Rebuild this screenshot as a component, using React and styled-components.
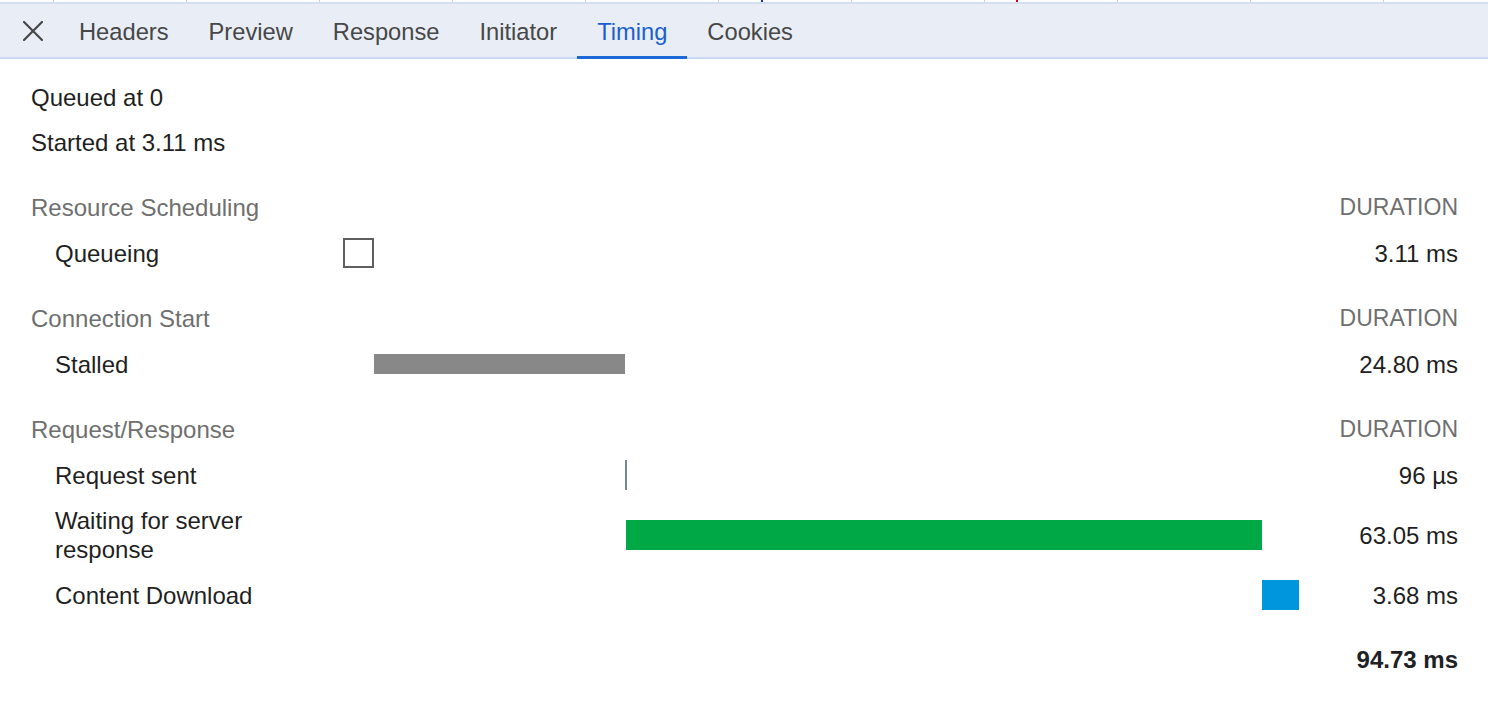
import React from 'react';
import styled, { createGlobalStyle } from 'styled-components';

const GlobalStyle = createGlobalStyle`
  html, body {
    margin: 0;
    padding: 0;
    background: #ffffff;
  }

  body {
    font-family: "Liberation Sans", Arial, Helvetica, sans-serif;
    color: #1f1f1f;
    -webkit-font-smoothing: antialiased;
  }
`;

const Page = styled.div`
  width: 1488px;
  height: 706px;
  overflow: hidden;
  background: #ffffff;
`;

const GridStrip = styled.div`
  display: flex;
  height: 2px;
  background: #ffffff;
`;

const GridCell = styled.div`
  flex: 0 0 ${(p) => p.$w}px;
  border-left: ${(p) => (p.$first ? 'none' : '1px solid #c9d4e0')};
  position: relative;
`;

const Mark = styled.span`
  position: absolute;
  top: 0;
  left: ${(p) => p.$x}px;
  width: 2px;
  height: 2px;
  background: ${(p) => p.$color};
`;

const TabBar = styled.div`
  display: flex;
  align-items: stretch;
  height: 53px;
  background: #e9eef6;
  border-top: 2px solid #d3dff1;
  border-bottom: 2px solid #c8d8ee;
`;

const CloseButton = styled.button`
  width: 59px;
  display: flex;
  align-items: center;
  justify-content: center;
  padding: 0 0 0 7px;
  border: 0;
  background: transparent;
  color: #474747;
`;

const Tab = styled.div`
  display: flex;
  align-items: center;
  padding: 2px 20px 0;
  margin-bottom: -2px;
  font-size: 23.7px;
  color: ${(p) => (p.$active ? '#1b5fcf' : '#474747')};
  box-shadow: ${(p) => (p.$active ? 'inset 0 -3px 0 #1b6ad8' : 'none')};
`;

const Content = styled.div`
  padding: 16px 30px 0 31px;
  font-size: 24px;
`;

const Summary = styled.div`
  line-height: 45px;
  margin-bottom: 19px;
`;

const Table = styled.div`
  display: grid;
  grid-template-columns: 312px 956px 1fr;
`;

const SectionHead = styled.div`
  box-sizing: border-box;
  height: 46px;
  padding-top: 1px;
  display: flex;
  align-items: center;
  color: #6f6f6f;
  margin-top: ${(p) => (p.$first ? 0 : 19)}px;
  justify-content: ${(p) => (p.$right ? 'flex-end' : 'flex-start')};
  font-size: ${(p) => (p.$right ? '23px' : '24px')};
`;

const Label = styled.div`
  min-height: 46px;
  box-sizing: border-box;
  padding: 8px 20px 8px 24px;
  line-height: 29px;
  display: flex;
  align-items: center;
`;

const Track = styled.div`
  display: flex;
  align-items: center;
`;

const Bar = styled.div`
  flex: none;
  box-sizing: border-box;
  height: ${(p) => p.$h}px;
  background: ${(p) => p.$color || 'transparent'};
  border: ${(p) => (p.$outline ? '2px solid #5f5f5f' : 'none')};
`;

const Duration = styled.div`
  box-sizing: border-box;
  display: flex;
  align-items: center;
  justify-content: flex-end;
  font-weight: ${(p) => (p.$bold ? 700 : 400)};
  color: ${(p) => (p.$bold ? '#202124' : '#1f1f1f')};
  min-height: 46px;
  padding-top: 1px;
  margin-top: ${(p) => (p.$bold ? 18 : 0)}px;
`;

const Spacer = styled.div`
  margin-top: 18px;
`;

const Filler = styled.div``;

const TOTAL = 94.73;

const sections = [
  {
    title: 'Resource Scheduling',
    rows: [{ label: 'Queueing', start: 0, len: 3.11, value: '3.11 ms', h: 30, outline: true }],
  },
  {
    title: 'Connection Start',
    rows: [{ label: 'Stalled', start: 3.11, len: 24.8, value: '24.80 ms', h: 20, color: '#888888' }],
  },
  {
    title: 'Request/Response',
    rows: [
      { label: 'Request sent', start: 27.91, len: 0.096, value: '96 µs', h: 30, color: '#74898c', min: 2 },
      { label: 'Waiting for server response', start: 28.006, len: 63.05, value: '63.05 ms', h: 30, color: '#00a846' },
      { label: 'Content Download', start: 91.056, len: 3.68, value: '3.68 ms', h: 30, color: '#0096de' },
    ],
  },
];

const tabs = ['Headers', 'Preview', 'Response', 'Initiator', 'Timing', 'Cookies'];

const gridCells = [53, 132, 132, 132, 132, 132, 132, 132, 132, 132, 132, 132];

const pct = (ms) => `${(ms / TOTAL) * 100}%`;

const App = () => (
  <>
    <GlobalStyle />
    <Page>
      <GridStrip>
        {gridCells.map((w, i) => (
          <GridCell key={i} $w={w} $first={i === 0}>
            {i === 6 && <Mark $x={42} $color="#1a2fb5" />}
            {i === 8 && <Mark $x={31} $color="#d0021b" />}
          </GridCell>
        ))}
      </GridStrip>
      <TabBar>
        <CloseButton aria-label="Close">
          <svg width="20" height="20" viewBox="0 0 20 20">
            <path d="M1 1 L19 19 M19 1 L1 19" stroke="currentColor" strokeWidth="2.2" strokeLinecap="square" />
          </svg>
        </CloseButton>
        {tabs.map((t) => (
          <Tab key={t} $active={t === 'Timing'}>
            {t}
          </Tab>
        ))}
      </TabBar>
      <Content>
        <Summary>
          <div>Queued at 0</div>
          <div>Started at 3.11 ms</div>
        </Summary>
        <Table>
          {sections.map((s, si) => (
            <React.Fragment key={s.title}>
              <SectionHead $first={si === 0}>{s.title}</SectionHead>
              <SectionHead $first={si === 0} />
              <SectionHead $first={si === 0} $right>
                DURATION
              </SectionHead>
              {s.rows.map((r) => (
                <React.Fragment key={r.label}>
                  <Label>{r.label}</Label>
                  <Track>
                    <Filler style={{ width: pct(r.start) }} />
                    <Bar
                      $h={r.h}
                      $color={r.color}
                      $outline={r.outline}
                      style={{ width: r.min ? `${r.min}px` : pct(r.len) }}
                    />
                  </Track>
                  <Duration>{r.value}</Duration>
                </React.Fragment>
              ))}
            </React.Fragment>
          ))}
          <Spacer />
          <Spacer />
          <Duration $bold>94.73 ms</Duration>
        </Table>
      </Content>
    </Page>
  </>
);

export default App;
